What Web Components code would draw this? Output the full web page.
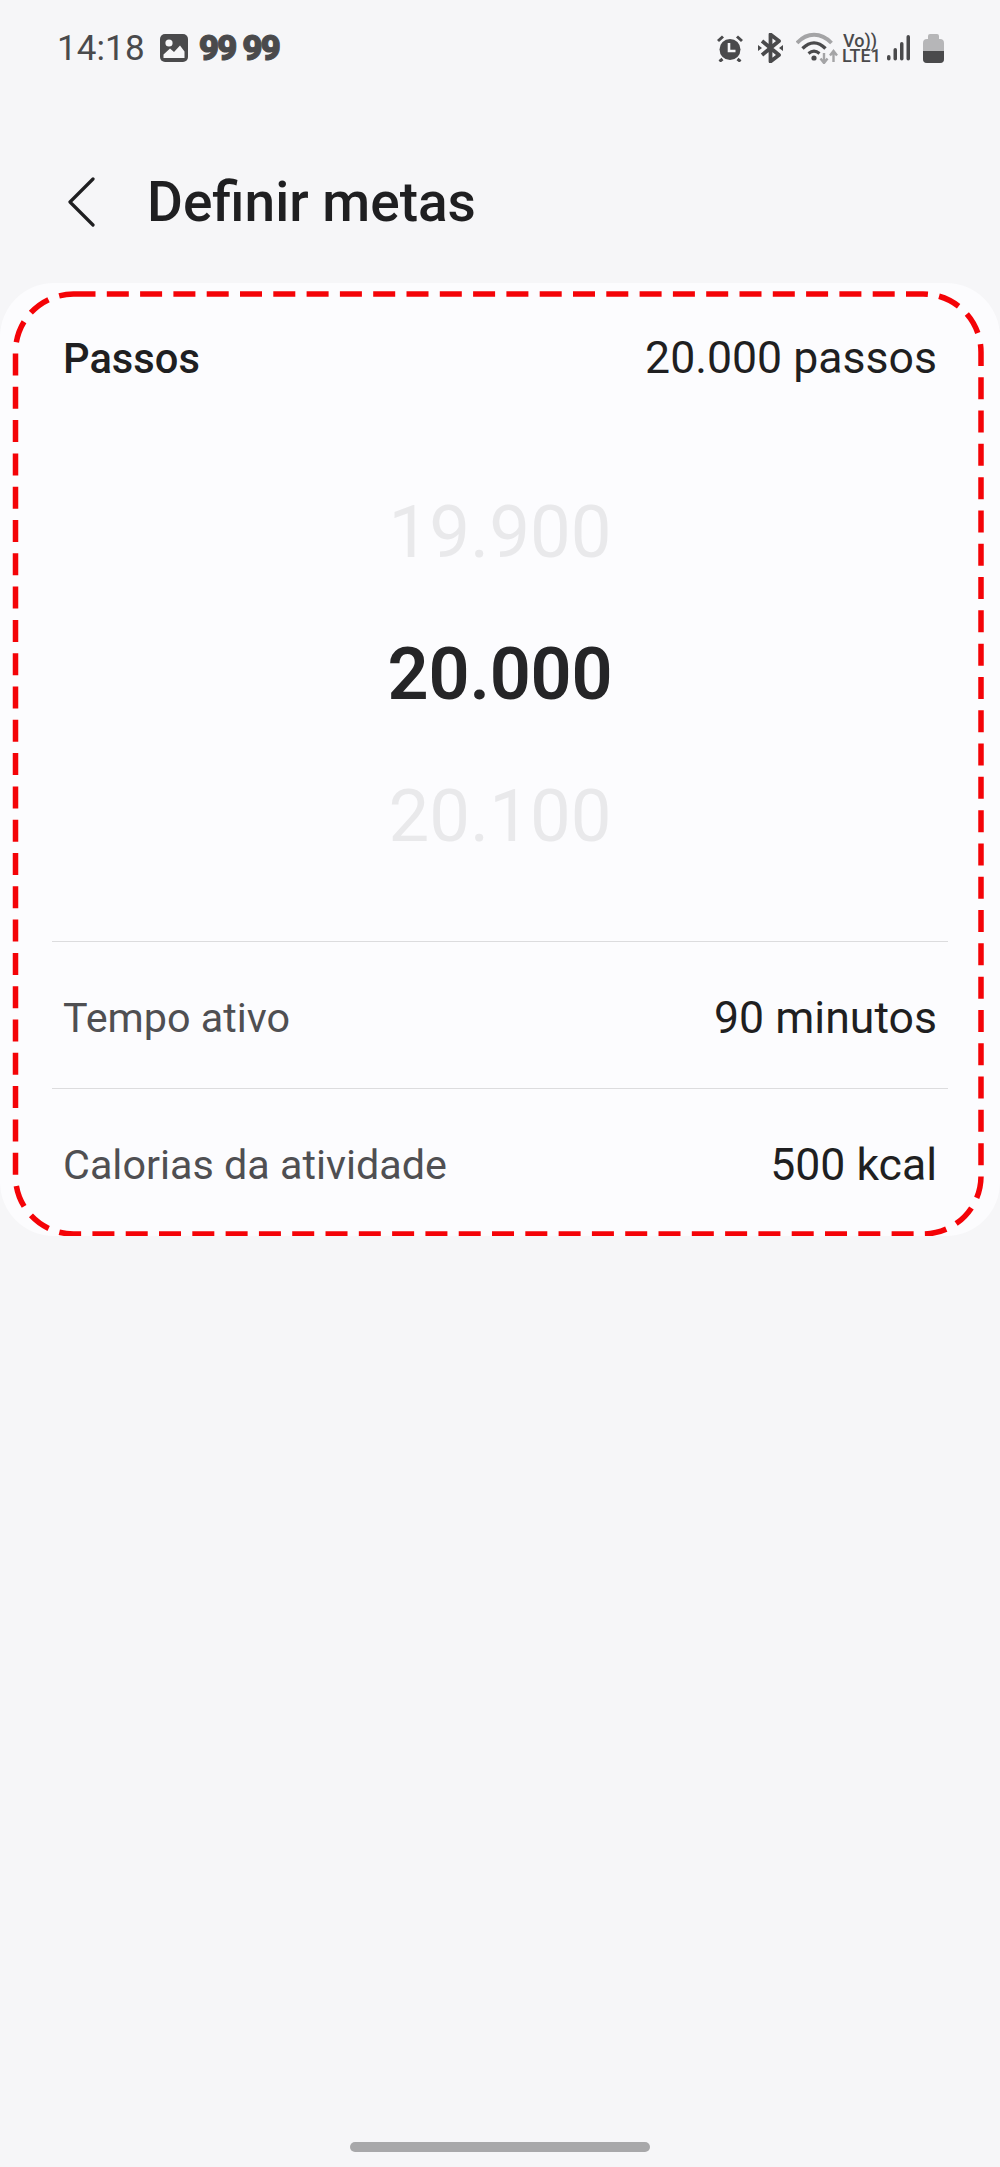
<!DOCTYPE html>
<html lang="pt">
<head>
<meta charset="utf-8">
<title>Definir metas</title>
<style>
  html, body { margin: 0; height: 100%; background: #f6f6f8; }
  body { font-family: Roboto, "Liberation Sans", sans-serif; }
</style>
</head>
<body>
<goal-screen>
  <status-bar></status-bar>
  <app-header title="Definir metas"></app-header>
  <goal-card>
    <goal-row label="Passos" value="20.000 passos" kind="head"></goal-row>
    <number-picker prev="19.900" current="20.000" next="20.100"></number-picker>
    <goal-row label="Tempo ativo" value="90 minutos" divider></goal-row>
    <goal-row label="Calorias da atividade" value="500 kcal" divider></goal-row>
  </goal-card>
  <nav-handle></nav-handle>
</goal-screen>

<script>
class GoalScreen extends HTMLElement {
  constructor() {
    super();
    this.attachShadow({ mode: 'open' });
    this.shadowRoot.innerHTML = `
      <style>
        :host {
          display: flex;
          flex-direction: column;
          height: 2167px;
          background: #f6f6f8;
          overflow: hidden;
        }
      </style>
      <slot></slot>
    `;
  }
}

class StatusBar extends HTMLElement {
  constructor() {
    super();
    this.attachShadow({ mode: 'open' });
    this.shadowRoot.innerHTML = `
      <style>
        :host {
          display: flex;
          justify-content: space-between;
          align-items: center;
          height: 48px;
          padding: 24px 56px 0 57px;
          color: #4a4a4c;
        }
        .side { display: flex; align-items: center; }
        .time { font-size: 35px; letter-spacing: .1px; margin-right: 15px; }
        .nines {
          font-size: 35px;
          font-weight: 900;
          letter-spacing: -2px;
          margin-left: 11px;
          -webkit-text-stroke: 1px #4a4a4c;
        }
        .nines + .nines { margin-left: 7px; }
        svg { display: block; }
        .lte {
          display: block;
          font-size: 18px;
          font-weight: 500;
          line-height: 15px;
          width: 36px;
          margin: 0 9px 0 4px;
          text-align: center;
          white-space: pre;
        }
      </style>
      <div class="side">
        <span class="time">14:18</span>
        <svg width="28" height="28" viewBox="0 0 28 28">
          <rect x="0" y="0" width="28" height="28" rx="5" fill="#4a4a4c"/>
          <circle cx="9" cy="9" r="3.6" fill="#f6f6f8"/>
          <path d="M3.5 20.5l6.5-6 4 3.5 6-6.5 4.500 6v6.500h-21z" fill="#f6f6f8"/>
        </svg>
        <span class="nines">99</span><span class="nines">99</span>
      </div>
      <div class="side">
        <svg width="26" height="27" viewBox="0 0 26 27" style="margin-right:15px">
          <circle cx="13" cy="14.500" r="10.500" fill="#4a4a4c"/>
          <path d="M12 8v8h6.500" fill="none" stroke="#f6f6f8" stroke-width="2.600"/>
          <path d="M1 6l5-4.500M25 6l-5-4.500M5.500 24l-3 2.500M20.500 24l3 2.500" stroke="#4a4a4c" stroke-width="3" fill="none"/>
        </svg>
        <svg width="25" height="30" viewBox="0 0 25 30" style="margin-right:13px">
          <path d="M4 8l17 14-8.500 6.500V1.500L21 8 4 22" fill="none" stroke="#4a4a4c" stroke-width="3.800" stroke-linejoin="round"/>
          <path d="M0 12l4 3-4 3zM25 12l-4 3 4 3z" fill="#4a4a4c"/>
        </svg>
        <svg width="42" height="32" viewBox="0 0 42 32">
          <path d="M1 11C11 0 25 0 35.500 11" fill="none" stroke="#a4a4a6" stroke-width="3.800"/>
          <path d="M6.500 16.500C14 9 22 9 29.500 16.500" fill="none" stroke="#4a4a4c" stroke-width="3.400"/>
          <path d="M12.500 21.500c3.500-3 7.500-3 11 0" fill="none" stroke="#4a4a4c" stroke-width="3"/>
          <circle cx="18" cy="26" r="2.600" fill="#4a4a4c"/>
          <path d="M28 21v10m-3.500-4.500l3.500 4.500 3.500-4.500" fill="none" stroke="#a4a4a6" stroke-width="2.400"/>
          <path d="M37.500 30V19m-3.500 4.500l3.500-4.500 3.500 4.500" fill="none" stroke="#a4a4a6" stroke-width="2.400"/>
        </svg>
        <span class="lte">Vo))
LTE1</span>
        <svg width="23" height="26" viewBox="0 0 23 26" style="margin-right:13px">
          <rect x="0" y="20" width="3.500" height="5.500" rx="1.750" fill="#4a4a4c"/>
          <rect x="6.500" y="13" width="3.500" height="12.500" rx="1.750" fill="#4a4a4c"/>
          <rect x="13" y="7" width="3.500" height="18.500" rx="1.750" fill="#4a4a4c"/>
          <rect x="19.500" y="0" width="3.500" height="25.500" rx="1.750" fill="#4a4a4c"/>
        </svg>
        <svg width="21" height="29" viewBox="0 0 21 29">
          <path d="M5 2a2 2 0 012-2h7a2 2 0 012 2v3h1a4 4 0 014 4v16a4 4 0 01-4 4H4a4 4 0 01-4-4V9a4 4 0 014-4h1z" fill="#b6b6b8"/>
          <path d="M0 17h21v8a4 4 0 01-4 4H4a4 4 0 01-4-4z" fill="#4a4a4c"/>
        </svg>
      </div>
    `;
  }
}

class AppHeader extends HTMLElement {
  constructor() {
    super();
    this.attachShadow({ mode: 'open' });
  }

  connectedCallback() {
    const title = this.getAttribute('title') || '';
    this.shadowRoot.innerHTML = `
      <style>
        :host {
          display: flex;
          align-items: center;
          height: 76px;
          margin-top: 92px;
          margin-bottom: 43px;
          padding-left: 68px;
          color: #1f1f21;
        }
        svg { display: block; margin-right: 51px; }
        h1 { margin: 0; font-size: 55px; font-weight: 500; }
      </style>
      <svg width="28" height="50" viewBox="0 0 28 50">
        <path d="M25 2L2 25l23 23" fill="none" stroke="#1f1f21" stroke-width="3.200" stroke-linecap="round" stroke-linejoin="round"/>
      </svg>
      <h1>${title}</h1>
    `;
  }
}

class GoalCard extends HTMLElement {
  constructor() {
    super();
    this.attachShadow({ mode: 'open' });
    this.shadowRoot.innerHTML = `
      <style>
        :host {
          display: block;
          position: relative;
          height: 953px;
          background: #fcfcfe;
          border-radius: 54px;
          box-sizing: border-box;
          padding: 0 52px;
        }
        svg.mark {
          position: absolute;
          left: 0;
          top: 0;
          pointer-events: none;
        }
      </style>
      <slot></slot>
      <svg class="mark" width="1000" height="953" viewBox="0 0 1000 953">
        <rect x="15.500" y="11" width="965.500" height="940" rx="58" fill="none" stroke="#f40307" stroke-width="5.500" stroke-dasharray="22 11.300"/>
      </svg>
    `;
  }
}

class GoalRow extends HTMLElement {
  constructor() {
    super();
    this.attachShadow({ mode: 'open' });
  }

  connectedCallback() {
    const label = this.getAttribute('label') || '';
    const value = this.getAttribute('value') || '';
    const head = this.getAttribute('kind') === 'head';
    const divider = this.hasAttribute('divider');
    this.shadowRoot.innerHTML = `
      <style>
        :host {
          display: flex;
          justify-content: space-between;
          align-items: center;
          box-sizing: border-box;
          height: ${head ? 150 : 147}px;
          padding: ${head ? '0 11px' : '5px 11px 0'};
          border-top: ${divider ? '1px solid #dcdcde' : 'none'};
        }
        .label { color: ${head ? '#1f1f21' : '#4f4f52'}; font-size: ${head ? 41.700 : 41.300}px; font-weight: ${head ? 500 : 400}; }
        .value { color: #1f1f21; font-size: 44.600px; }
      </style>
      <span class="label">${label}</span>
      <span class="value">${value}</span>
    `;
  }
}

class NumberPicker extends HTMLElement {
  constructor() {
    super();
    this.attachShadow({ mode: 'open' });
  }

  connectedCallback() {
    const prev = this.getAttribute('prev') || '';
    const current = this.getAttribute('current') || '';
    const next = this.getAttribute('next') || '';
    this.shadowRoot.innerHTML = `
      <style>
        :host {
          display: flex;
          flex-direction: column;
          align-items: center;
          box-sizing: border-box;
          height: 508px;
          padding-top: 29px;
        }
        div {
          height: 142px;
          line-height: 142px;
          font-size: 72.500px;
          color: #e9e9eb;
        }
        .now { color: #252527; font-size: 72px; font-weight: 600; letter-spacing: -.2px; }
      </style>
      <div>${prev}</div>
      <div class="now">${current}</div>
      <div>${next}</div>
    `;
  }
}

class NavHandle extends HTMLElement {
  constructor() {
    super();
    this.attachShadow({ mode: 'open' });
    this.shadowRoot.innerHTML = `
      <style>
        :host {
          display: flex;
          justify-content: center;
          margin-top: auto;
          padding-bottom: 15px;
        }
        div { width: 300px; height: 10px; border-radius: 5px; background: #a8a8aa; }
      </style>
      <div></div>
    `;
  }
}

customElements.define('goal-screen', GoalScreen);
customElements.define('status-bar', StatusBar);
customElements.define('app-header', AppHeader);
customElements.define('goal-card', GoalCard);
customElements.define('goal-row', GoalRow);
customElements.define('number-picker', NumberPicker);
customElements.define('nav-handle', NavHandle);
</script>
</body>
</html>
